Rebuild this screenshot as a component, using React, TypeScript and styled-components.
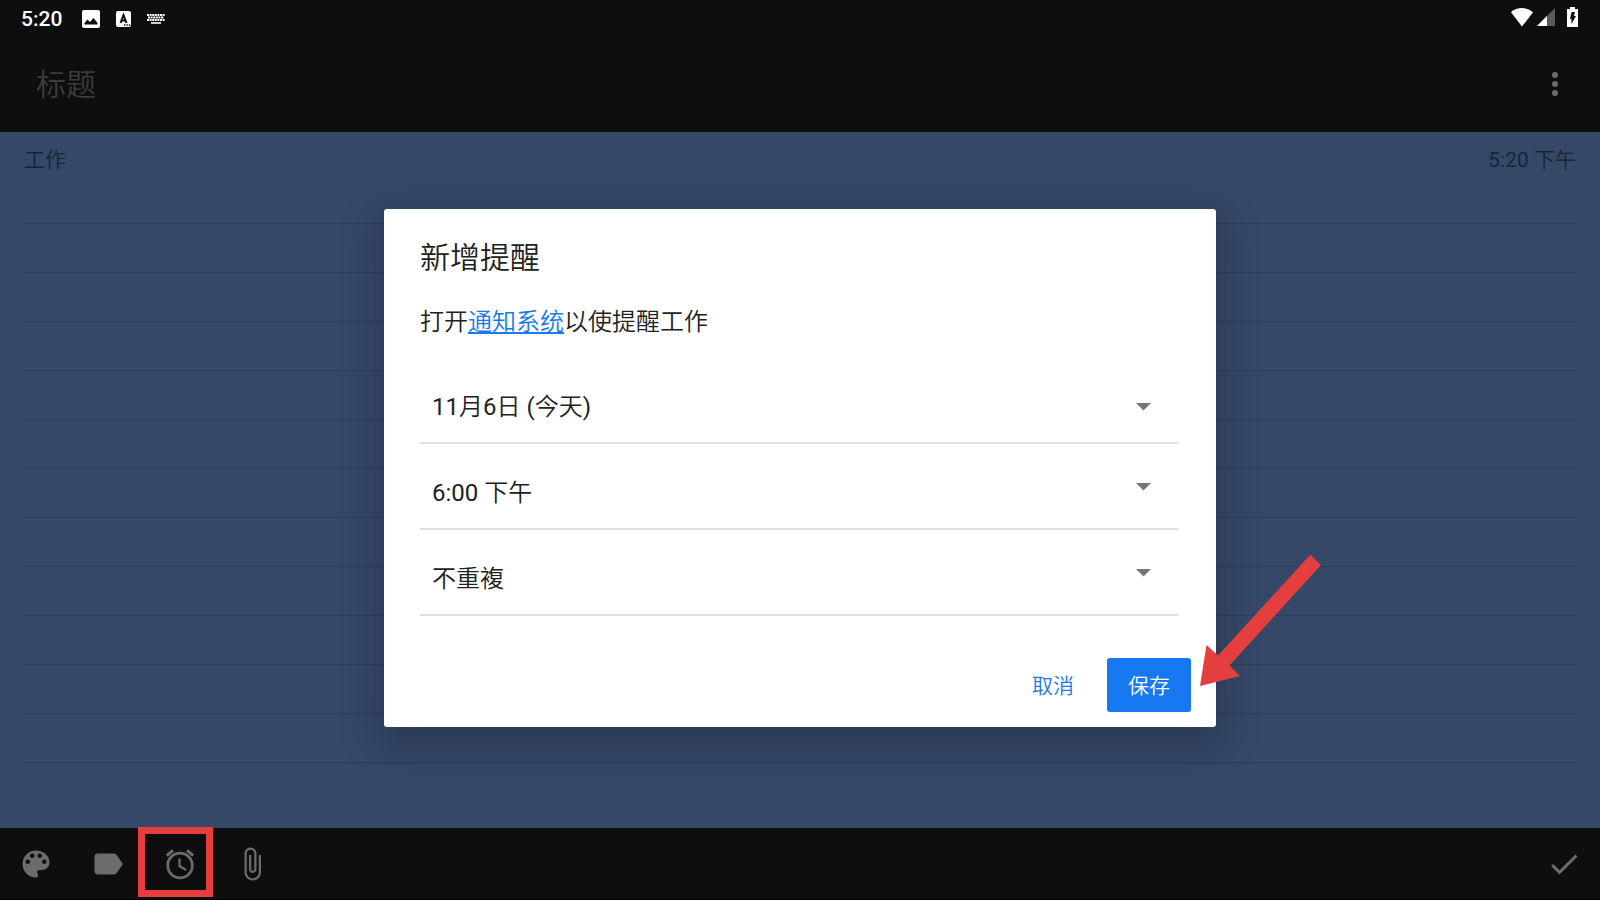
import React from "react";
import styled, { createGlobalStyle } from "styled-components";

const GlobalStyle = createGlobalStyle`
  *, *::before, *::after { box-sizing: border-box; }
  html, body, #root { height: 100%; }
  body {
    margin: 0;
    background: #0e0e0e;
    font-family: Roboto, "Noto Sans CJK SC DemiLight", "Noto Sans CJK SC", sans-serif;
    font-weight: 400;
  }
  button, input, select { font: inherit; margin: 0; }
`;

const Screen = styled.div`
  min-height: 100%;
  display: flex;
  flex-direction: column;
  position: relative;
`;

const StatusBar = styled.div`
  height: 36px;
  padding: 0 22px 0 21px;
  display: flex;
  justify-content: space-between;
  color: #fff;
`;

const StatusNotices = styled.div`
  display: flex;
  align-items: center;
  gap: 16px;
  padding-top: 1px;
`;

const StatusSignals = styled.div`
  display: flex;
  align-items: center;
  gap: 4px;
  padding-bottom: 2px;
`;

const Clock = styled.span`
  font-size: 21px;
  line-height: 36px;
  font-weight: 500;
  margin-right: 4px;
`;

const Header = styled.header`
  height: 96px;
  padding: 0 27px 0 36px;
  display: flex;
  align-items: center;
  justify-content: space-between;
`;

const TitleInput = styled.input`
  flex: 1;
  min-width: 0;
  padding: 2px 0 0;
  border: 0;
  outline: 0;
  background: transparent;
  color: #ccc;
  font-size: 30px;
  line-height: 48px;
  &::placeholder { color: #3b3b3b; opacity: 1; }
`;

const IconButton = styled.button<{ $size: number }>`
  position: relative;
  width: ${(p) => p.$size}px;
  height: 71px;
  padding: 0;
  border: 0;
  background: none;
  color: #6b6b6b;
  display: flex;
  align-items: center;
  justify-content: center;
`;

const Note = styled.main`
  flex: 1;
  background: #354867;
  padding: 0 24px;
`;

const NoteMeta = styled.div`
  height: 43px;
  padding-top: 12px;
  display: flex;
  justify-content: space-between;
  color: #1b2434;
  font-size: 21px;
  line-height: 32px;
`;

const RuledLine = styled.div`
  height: 49px;
  border-bottom: 1px solid #303e5b;
`;

const BottomBar = styled.footer`
  height: 72px;
  display: flex;
  justify-content: space-between;
  border-bottom: 1px solid #050005;
`;

const Tools = styled.div`
  display: flex;
`;

const Highlight = styled.span`
  position: absolute;
  inset: -1px 3px 2px -6px;
  border: 7px solid #e43e3e;
  pointer-events: none;
`;

const Overlay = styled.div`
  position: absolute;
  inset: 36px 0 0;
  display: flex;
  align-items: center;
  justify-content: center;
`;

const Dialog = styled.form`
  width: 832px;
  max-width: 100%;
  padding: 25px 37px 15px 36px;
  border-radius: 3px;
  background: #fff;
  color: #212121;
  box-shadow: 0 12px 36px 4px rgba(20, 28, 44, 0.35);
`;

const DialogTitle = styled.h2`
  margin: 0;
  font-size: 30px;
  line-height: 48px;
  font-weight: 350;
`;

const Hint = styled.p`
  margin: 20px 0 16px;
  font-size: 24px;
  font-weight: 350;
  line-height: 40px;
`;

const HintLink = styled.a`
  color: #1878f2;
  text-decoration: underline;
  text-underline-offset: 2px;
`;

const Field = styled.label`
  position: relative;
  display: block;
  height: 86px;
  padding: 12px 0 0;
  border-bottom: 2px solid #e0e0e0;
`;

const Select = styled.select`
  appearance: none;
  display: block;
  width: 100%;
  height: 72px;
  padding: 2px 48px 0 12px;
  border: 0;
  outline: 0;
  background: transparent;
  color: #212121;
  font-size: 24px;
  line-height: 36px;
`;

const Caret = styled.svg<{ $raised: boolean }>`
  position: absolute;
  right: 28px;
  top: ${(p) => (p.$raised ? 39 : 45)}px;
  pointer-events: none;
`;

const Actions = styled.div`
  display: flex;
  justify-content: flex-end;
  gap: 12px;
  margin: 42px -12px 0 0;
`;

const ActionButton = styled.button<{ $primary?: boolean }>`
  position: relative;
  height: 54px;
  padding: 0 21px;
  border: 0;
  border-radius: 3px;
  background: ${(p) => (p.$primary ? "#1878f2" : "transparent")};
  color: ${(p) => (p.$primary ? "#fff" : "#1878f2")};
  font-size: 21px;
  font-weight: 350;
  line-height: 56px;
`;

const Pointer = styled.svg`
  position: absolute;
  left: 93px;
  bottom: 24px;
  pointer-events: none;
`;

const icons = {
  palette:
    "M12 3c-4.97 0-9 4.03-9 9s4.03 9 9 9c.83 0 1.5-.67 1.5-1.5 0-.39-.15-.74-.39-1.01-.23-.26-.38-.61-.38-.99 0-.83.67-1.5 1.5-1.5H16c2.76 0 5-2.24 5-5 0-4.42-4.03-8-9-8zm-5.5 9c-.83 0-1.5-.67-1.5-1.5S5.67 9 6.5 9 8 9.67 8 10.5 7.33 12 6.5 12zm3-4C8.67 8 8 7.33 8 6.5S8.67 5 9.5 5s1.5.67 1.5 1.5S10.33 8 9.5 8zm5 0c-.83 0-1.5-.67-1.5-1.5S13.67 5 14.5 5s1.5.67 1.5 1.5S15.33 8 14.5 8zm3 4c-.83 0-1.5-.67-1.5-1.5S16.67 9 17.5 9s1.5.67 1.5 1.5-.67 1.5-1.5 1.5z",
  label:
    "M17.63 5.84C17.27 5.33 16.67 5 16 5L5 5.01C3.9 5.01 3 5.9 3 7v10c0 1.1.9 1.99 2 1.99L16 19c.67 0 1.27-.33 1.63-.84L22 12l-4.37-6.16z",
  attach:
    "M16.5 6v11.5c0 2.21-1.79 4-4 4s-4-1.79-4-4V5c0-1.38 1.12-2.5 2.5-2.5s2.5 1.12 2.5 2.5v10.5c0 .55-.45 1-1 1s-1-.45-1-1V6H10v9.5c0 1.38 1.12 2.5 2.5 2.5s2.5-1.12 2.5-2.5V5c0-2.21-1.79-4-4-4S7 2.79 7 5v12.5c0 3.04 2.46 5.5 5.5 5.5s5.5-2.46 5.5-5.5V6h-1.5z",
  check: "M9 16.17 4.83 12l-1.42 1.41L9 19 21 7l-1.41-1.41z",
};

const Glyph = ({ d }: { d: string }) => (
  <svg width="36" height="36" viewBox="0 0 24 24" fill="currentColor" aria-hidden="true">
    <path d={d} />
  </svg>
);

const AlarmGlyph = () => (
  <svg width="36" height="36" viewBox="0 0 36 36" fill="none" stroke="currentColor" aria-hidden="true">
    <circle cx="18" cy="19.500" r="12.300" strokeWidth="2.800" />
    <path d="M17.500 12.500v7.500l6.500 4" strokeWidth="2.300" />
    <path d="M4.800 9.700 11 4.300M31.200 9.700 25 4.300" strokeWidth="3" />
  </svg>
);

const fields = [
  { label: "日期", value: "11月6日 (今天)" },
  { label: "时间", value: "6:00 下午" },
  { label: "重複", value: "不重複" },
];

export default function App() {
  return (
    <>
      <GlobalStyle />
      <Screen>
        <StatusBar>
          <StatusNotices>
            <Clock>5:20</Clock>
            <svg width="18" height="18" viewBox="0 0 18 18" aria-hidden="true">
              <rect width="18" height="18" rx="2" fill="#fff" />
              <path d="M2.500 14.500V13L5.500 9.500l2.500 2.500L11.500 8l4 5v1.500z" fill="#0e0e0e" />
            </svg>
            <svg width="15" height="16" viewBox="0 0 15 16" aria-hidden="true">
              <rect width="15" height="16" rx="2" fill="#fff" />
              <path d="M4.500 12 7.500 4 10.500 12M5.500 9.400h4" fill="none" stroke="#0e0e0e" strokeWidth="2" />
              <path d="M8 14h1.400M10.400 14h1.400M12.800 14h1.400" stroke="#0e0e0e" strokeWidth="1.400" />
            </svg>
            <svg width="18" height="10" viewBox="0 0 18 10" aria-hidden="true">
              <path d="M0 1h18M1 3.500h16M0 6h18" stroke="#fff" strokeWidth="2" strokeDasharray="2 .6" fill="none" />
              <path d="M4 9h10" stroke="#fff" strokeWidth="1.600" />
            </svg>
          </StatusNotices>
          <StatusSignals>
            <svg width="22" height="19" viewBox="0 0 22 19" aria-hidden="true">
              <path d="M0 4.300C6.500-1.300 15.500-1.300 22 4.300L11 18.500z" fill="#fff" />
            </svg>
            <svg width="26" height="18" viewBox="0 0 26 18" aria-hidden="true">
              <path d="M0 18 18 0v18z" fill="#5a5a5a" />
              <path d="M0 18 10 8v10z" fill="#fff" />
            </svg>
            <svg width="11" height="20" viewBox="0 0 11 20" aria-hidden="true">
              <path d="M3 0h5v2h3v18H0V2h3z" fill="#fff" />
              <path d="M4.500 5H8L7 9h2l-4.500 8v-5H3z" fill="#0e0e0e" />
            </svg>
          </StatusSignals>
        </StatusBar>

        <Header>
          <TitleInput placeholder="标题" aria-label="标题" />
          <IconButton type="button" $size={36} aria-label="更多">
            <svg width="36" height="36" viewBox="0 0 36 36" fill="currentColor" aria-hidden="true">
              <circle cx="18" cy="9" r="3" />
              <circle cx="18" cy="18" r="3" />
              <circle cx="18" cy="27" r="3" />
            </svg>
          </IconButton>
        </Header>

        <Note>
          <NoteMeta>
            <span>工作</span>
            <span>5:20 下午</span>
          </NoteMeta>
          {Array.from({ length: 12 }, (_, i) => (
            <RuledLine key={i} />
          ))}
        </Note>

        <BottomBar>
          <Tools>
            <IconButton type="button" $size={71} aria-label="颜色">
              <Glyph d={icons.palette} />
            </IconButton>
            <IconButton type="button" $size={73} aria-label="标签">
              <Glyph d={icons.label} />
            </IconButton>
            <IconButton type="button" $size={72} aria-label="提醒">
              <AlarmGlyph />
              <Highlight />
            </IconButton>
            <IconButton type="button" $size={72} aria-label="附件">
              <Glyph d={icons.attach} />
            </IconButton>
          </Tools>
          <IconButton type="button" $size={72} aria-label="完成">
            <Glyph d={icons.check} />
          </IconButton>
        </BottomBar>

        <Overlay>
          <Dialog role="dialog" aria-labelledby="dialog-title">
            <DialogTitle id="dialog-title">新增提醒</DialogTitle>
            <Hint>
              打开<HintLink href="#notifications">通知系统</HintLink>以使提醒工作
            </Hint>
            {fields.map((field, i) => (
              <Field key={field.label}>
                <Select aria-label={field.label} defaultValue={field.value}>
                  <option>{field.value}</option>
                </Select>
                <Caret $raised={i > 0} width="15" height="8" viewBox="0 0 15 8" aria-hidden="true">
                  <path d="M0 0h15L7.500 7.500z" fill="#757575" />
                </Caret>
              </Field>
            ))}
            <Actions>
              <ActionButton type="button">取消</ActionButton>
              <ActionButton type="button" $primary>
                保存
                <Pointer width="122" height="134" viewBox="0 0 122 134" aria-hidden="true">
                  <path d="M0 132 6.500 91 18 101.500 110.500 .5 121 11 29.500 111.500 40 122z" fill="#e43e3e" />
                </Pointer>
              </ActionButton>
            </Actions>
          </Dialog>
        </Overlay>
      </Screen>
    </>
  );
}
